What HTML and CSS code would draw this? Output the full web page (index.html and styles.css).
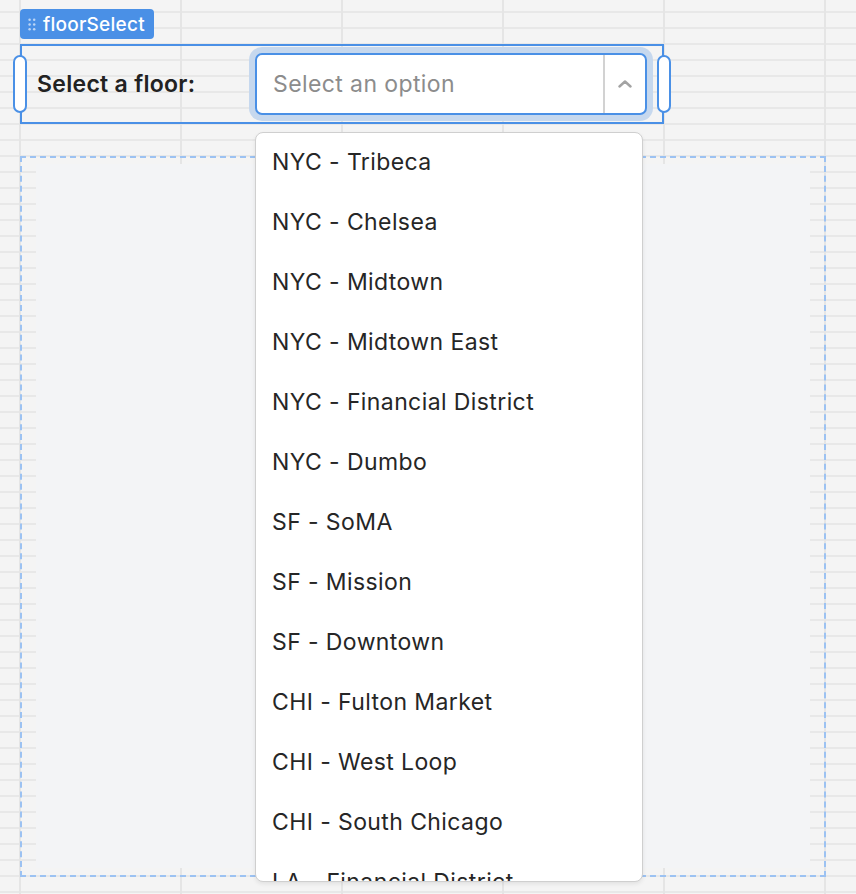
FILE: index.html
```html
<!DOCTYPE html>
<html lang="en">
<head>
<meta charset="utf-8">
<title>floorSelect</title>
<link rel="stylesheet" href="styles.css">
</head>
<body>
<div class="canvas">
  <div class="tag">
    <svg class="tag-dots" width="9" height="13" viewBox="0 0 9 13">
      <circle cx="1.6" cy="1.8" r="1.25"/><circle cx="6.2" cy="1.8" r="1.25"/>
      <circle cx="1.6" cy="6.5" r="1.25"/><circle cx="6.2" cy="6.5" r="1.25"/>
      <circle cx="1.6" cy="11.2" r="1.25"/><circle cx="6.2" cy="11.2" r="1.25"/>
    </svg>
    <span class="tag-name">floorSelect</span>
  </div>
  <div class="widget">
    <span class="handle handle-left"></span>
    <label class="field-label">Select a floor:</label>
    <div class="select">
      <span class="select-value">Select an option</span>
      <span class="select-toggle">
        <svg width="14" height="8" viewBox="0 0 14 8"><path d="M1.5 6.5 L7 1.5 L12.5 6.5" fill="none" stroke="#a3a3a3" stroke-width="2.4" stroke-linecap="round" stroke-linejoin="round"/></svg>
      </span>
    </div>
    <span class="handle handle-right"></span>
    <ul class="menu">
      <li>NYC - Tribeca</li>
      <li>NYC - Chelsea</li>
      <li>NYC - Midtown</li>
      <li>NYC - Midtown East</li>
      <li>NYC - Financial District</li>
      <li>NYC - Dumbo</li>
      <li>SF - SoMA</li>
      <li>SF - Mission</li>
      <li>SF - Downtown</li>
      <li>CHI - Fulton Market</li>
      <li>CHI - West Loop</li>
      <li>CHI - South Chicago</li>
      <li>LA - Financial District</li>
      <li>LA - Santa Monica</li>
    </ul>
  </div>
  <div class="container">
    <div class="container-body"></div>
  </div>
</div>
</body>
</html>
```

FILE: styles.css
```css
html, body {
  margin: 0;
  padding: 0;
}
body {
  width: 856px;
  height: 894px;
  overflow: hidden;
  font-family: Inter, "Noto Sans", "Liberation Sans", sans-serif;
  background-color: #f4f4f4;
  background-image:
    linear-gradient(to right, #e5e5e5 2px, transparent 2px),
    linear-gradient(to bottom, #e8e8e8 2px, transparent 2px);
  background-size: 161px 100%, 100% 16px;
  background-position: 19px 0, 0 11px;
}
.canvas {
  padding: 9px 0 0 20px;
  width: 806px;
}
.tag {
  display: inline-flex;
  align-items: center;
  gap: 6px;
  height: 30px;
  padding: 0 9px 0 8px;
  box-sizing: border-box;
  background: #4a90e6;
  border-radius: 4px;
  color: #fff;
}
.tag-dots {
  fill: #bcd5f5;
}
.tag-name {
  font-size: 19px;
  font-weight: 500;
  line-height: 1;
  letter-spacing: 0.25px;
}
.widget {
  position: relative;
  margin-top: 5px;
  width: 644px;
  height: 80px;
  box-sizing: border-box;
  border: 2px solid #4a90e6;
  display: flex;
  align-items: center;
  padding: 0 15px;
}
.field-label {
  font-size: 23px;
  font-weight: 600;
  color: #222;
  letter-spacing: 0.3px;
}
.select {
  margin-left: auto;
  width: 392px;
  height: 62px;
  box-sizing: border-box;
  border: 2px solid #4a90e6;
  border-radius: 7px;
  background: #fff;
  box-shadow: 0 0 0 6px #c6d8ee;
  display: flex;
  align-items: stretch;
}
.select-value {
  flex: 1;
  display: flex;
  align-items: center;
  padding-left: 16px;
  font-size: 23px;
  letter-spacing: 0.4px;
  color: #8c8c8c;
}
.select-toggle {
  width: 40px;
  border-left: 2px solid #d2d2d2;
  display: flex;
  align-items: center;
  justify-content: center;
}
.handle {
  position: absolute;
  top: 9px;
  width: 14px;
  height: 58px;
  box-sizing: border-box;
  border: 2px solid #4a90e6;
  border-radius: 7px;
  background: #fff;
}
.handle-left { left: -9px; }
.handle-right { right: -9px; }
.menu {
  position: absolute;
  z-index: 2;
  left: 233px;
  top: 86px;
  width: 388px;
  height: 750px;
  box-sizing: border-box;
  margin: 0;
  padding: 0;
  list-style: none;
  overflow: hidden;
  background: #fff;
  border: 1px solid #cfcfcf;
  border-radius: 8px;
  box-shadow: 0 2px 4px rgba(0, 0, 0, 0.08);
}
.menu li {
  height: 60px;
  box-sizing: border-box;
  display: flex;
  align-items: center;
  padding: 0 0 3px 16px;
  font-size: 23px;
  letter-spacing: 0.4px;
  color: #262626;
}
.container {
  margin-top: 32px;
  width: 806px;
  height: 721px;
  box-sizing: border-box;
  border: 2px dashed #9cc2f2;
  padding: 6px 14px 7px;
  display: flex;
}
.container-body {
  flex: 1;
  background: #f3f4f6;
}
```
